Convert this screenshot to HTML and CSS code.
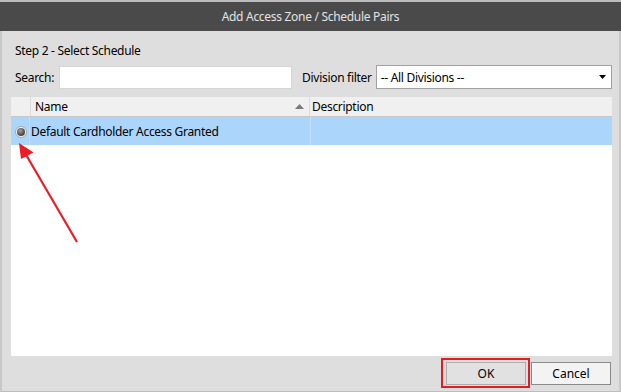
FILE: index.html
```html
<!DOCTYPE html>
<html>
<head>
<meta charset="utf-8">
<link rel="stylesheet" href="styles.css">
</head>
<body>
<div class="window">
  <div class="titlebar">Add Access Zone / Schedule Pairs</div>
  <div class="content">
    <div class="step">Step 2 - Select Schedule</div>
    <div class="filters">
      <span class="lbl">Search:</span>
      <div class="search"></div>
      <span class="lbl div-lbl">Division filter</span>
      <div class="select">
        <span>-- All Divisions --</span>
        <svg class="dd" width="7" height="4" viewBox="0 0 7 4"><path d="M0 0H7L3.5 4Z" fill="#000"/></svg>
      </div>
    </div>
    <div class="grid">
      <div class="grid-head">
        <div class="c-sel"></div>
        <div class="c-name"><span>Name</span>
          <svg class="sort" width="9" height="5" viewBox="0 0 9 5"><path d="M0 5H9L4.5 0Z" fill="#7a7a7a"/></svg>
        </div>
        <div class="c-desc">Description</div>
      </div>
      <div class="grid-row selected">
        <div class="c-sel"><span class="radio"><span class="dot"></span></span></div>
        <div class="c-name">Default Cardholder Access Granted</div>
        <div class="c-desc"></div>
      </div>
    </div>
    <div class="buttons">
      <div class="highlight"><div class="btn ok">OK</div></div>
      <div class="btn cancel">Cancel</div>
    </div>
  </div>
  <svg class="annot" width="621" height="392" viewBox="0 0 621 392">
    <line x1="77" y1="242" x2="25" y2="153" stroke="#ec1c24" stroke-width="2.2"/>
    <path d="M19 143L21 159L33.5 152.5Z" fill="#ec1c24"/>
  </svg>
</div>
</body>
</html>
```

FILE: styles.css
```css
html, body {
  margin: 0;
  padding: 0;
}
body {
  width: 621px;
  height: 392px;
  overflow: hidden;
  font-family: "Noto Sans", "Open Sans", sans-serif;
  font-size: 12px;
  color: #000;
}
.window {
  position: relative;
  width: 621px;
  height: 392px;
  box-sizing: border-box;
  border-top: 2px solid #bcbcbc;
  display: flex;
  flex-direction: column;
  background: #dedede;
}
.titlebar {
  height: 29px;
  background: #4a4a4a;
  color: #e2e2e2;
  display: flex;
  align-items: center;
  justify-content: center;
  font-size: 12px;
  letter-spacing: -0.3px;
}
.content {
  flex: 1;
  display: flex;
  flex-direction: column;
  border-left: 2px solid #c8c8c8;
  border-right: 2px solid #c8c8c8;
  border-bottom: 1px solid #bdbdbd;
  padding: 12px 6px 4px 9px;
  min-height: 0;
}
.step {
  height: 16px;
  line-height: 16px;
  padding-left: 4px;
  letter-spacing: -0.3px;
}
.filters {
  margin-top: 6px;
  height: 24px;
  display: flex;
  align-items: center;
}
.lbl {
  padding-left: 4px;
  letter-spacing: -0.3px;
}
.search {
  margin-left: 5px;
  width: 231px;
  height: 21px;
  background: #fff;
  border: 1px solid #d6d6d6;
}
.div-lbl {
  margin-left: 6px;
}
.select {
  margin-left: 4px;
  height: 22px;
  background: #fff;
  border: 1px solid #a2a2a2;
  display: flex;
  align-items: center;
  justify-content: space-between;
  padding: 0 5px 0 4px;
  box-sizing: content-box;
  width: 225px;
  letter-spacing: -0.3px;
}
.dd {
  display: block;
}
.grid {
  margin-top: 8px;
  flex: 1;
  background: #fff;
  display: flex;
  flex-direction: column;
  width: 601px;
}
.grid-head {
  height: 19px;
  background: #f0f0f0;
  border-bottom: 1px solid #c9c9c9;
  display: flex;
  line-height: 20px;
}
.grid-head > div {
  border-right: 1px solid #dcdcdc;
}
.c-sel {
  width: 19px;
  flex: none;
}
.c-name {
  width: 279px;
  flex: none;
}
.grid-head .c-name {
  display: flex;
  align-items: center;
  justify-content: space-between;
  padding-left: 4px;
  padding-right: 5px;
  box-sizing: border-box;
  letter-spacing: -0.3px;
}
.sort {
  display: block;
}
.c-desc {
  flex: 1;
}
.grid-head .c-desc {
  border-right: none;
  padding-left: 2px;
  letter-spacing: -0.3px;
}
.grid-row {
  height: 28px;
  display: flex;
  align-items: stretch;
  line-height: 29px;
}
.grid-row > div {
  border-right: 1px solid #c3def7;
}
.grid-row > .c-desc {
  border-right: none;
}
.selected {
  background: #abd5fb;
}
.grid-row .c-sel {
  display: flex;
  align-items: center;
  justify-content: center;
  padding-left: 2px;
  box-sizing: border-box;
  padding-top: 2px;
}
.grid-row .c-name {
  padding-left: 1px;
  letter-spacing: -0.3px;
}
.radio {
  width: 12px;
  height: 12px;
  border-radius: 50%;
  background: #f4f4f4;
  border: 1px solid #a8a8a8;
  display: flex;
  align-items: center;
  justify-content: center;
  box-sizing: border-box;
}
.dot {
  width: 8px;
  height: 8px;
  border-radius: 50%;
  background: radial-gradient(circle at 40% 35%, #a0a0a0 0%, #555 55%, #2a2a2a 100%);
}
.buttons {
  margin-top: 2px;
  height: 29px;
  display: flex;
  justify-content: flex-end;
  align-items: flex-start;
  padding-right: 2px;
}
.highlight {
  border: 2px solid #e31b23;
  padding: 2px 2px 1px 3px;
  margin-right: 1px;
}
.btn {
  height: 21px;
  width: 78px;
  display: flex;
  align-items: center;
  justify-content: center;
  font-size: 12px;
}
.ok {
  background: #e1e1e1;
  border: 1px solid #adadad;
}
.cancel {
  margin-top: 4px;
  background: #f3f3f3;
  border: 1px solid #8a8a8a;
}
.annot {
  position: absolute;
  left: 0;
  top: -2px;
  pointer-events: none;
}
```
